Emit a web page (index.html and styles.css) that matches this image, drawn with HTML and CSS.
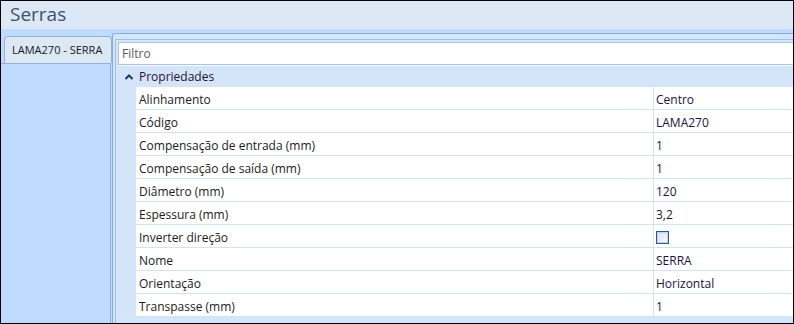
FILE: index.html
```html
<!DOCTYPE html>
<html lang="pt">
<head>
    <meta charset="UTF-8">
    <title>Serras</title>
    <link rel="stylesheet" href="styles.css">
</head>
<body>
    <div class="janela">
        <header class="titulo">Serras</header>
        <div class="area">
            <aside class="lateral">
                <div class="aba">LAMA270 - SERRA</div>
                <div class="painel-lateral"></div>
            </aside>
            <section class="painel">
                <div class="painel-interno">
                    <div class="filtro">Filtro</div>
                    <div class="grade">
                        <div class="categoria">
                            <span class="seta">
                                <svg width="8" height="6" viewBox="0 0 8 6"><path d="M0.5 5 L4 1.5 L7.5 5" fill="none" stroke="#1c3a68" stroke-width="2"/></svg>
                            </span>
                            Propriedades
                        </div>
                        <div class="linha"><div class="nome">Alinhamento</div><div class="valor">Centro</div></div>
                        <div class="linha"><div class="nome">Código</div><div class="valor">LAMA270</div></div>
                        <div class="linha"><div class="nome">Compensação de entrada (mm)</div><div class="valor">1</div></div>
                        <div class="linha"><div class="nome">Compensação de saída (mm)</div><div class="valor">1</div></div>
                        <div class="linha"><div class="nome">Diâmetro (mm)</div><div class="valor">120</div></div>
                        <div class="linha"><div class="nome">Espessura (mm)</div><div class="valor">3,2</div></div>
                        <div class="linha"><div class="nome">Inverter direção</div><div class="valor"><span class="caixa"></span></div></div>
                        <div class="linha"><div class="nome">Nome</div><div class="valor">SERRA</div></div>
                        <div class="linha"><div class="nome">Orientação</div><div class="valor">Horizontal</div></div>
                        <div class="linha"><div class="nome">Transpasse (mm)</div><div class="valor">1</div></div>
                    </div>
                </div>
            </section>
        </div>
    </div>
</body>
</html>
```

FILE: styles.css
```css
body {
    margin: 0;
    font-family: "Open Sans", "Noto Sans", sans-serif;
    font-size: 12px;
    color: #1a1a1a;
    overflow: hidden;
}

.janela {
    width: 794px;
    height: 324px;
    border: 1px solid #000;
    box-sizing: border-box;
    display: flex;
    flex-direction: column;
    overflow: hidden;
    background-color: #bfdbff;
}

.titulo {
    height: 28px;
    line-height: 27px;
    padding-left: 9px;
    font-size: 19px;
    color: #3f5168;
    background-color: #dce8f6;
}

.area {
    flex: 1;
    display: flex;
    background-color: #bfdbff;
}

/* coluna da esquerda com a aba */
.lateral {
    width: 111px;
    display: flex;
    flex-direction: column;
    flex-shrink: 0;
}

.aba {
    position: relative;
    z-index: 1;
    margin: 7px 0 0 3px;
    width: 108px;
    height: 27px;
    line-height: 26px;
    padding-left: 7px;
    box-sizing: border-box;
    background-color: #dde8f5;
    border: 1px solid #8fb2df;
    border-bottom: none;
    border-radius: 4px 4px 0 0;
    font-size: 11px;
    white-space: nowrap;
}

.painel-lateral {
    flex: 1;
    width: 110px;
    border-right: 1px solid #8aafe0;
    box-sizing: border-box;
    border-top: 1px solid #8fb2df;
}

.painel {
    flex: 1;
    margin-top: 4px;
    padding: 5px 0 0 2px;
    background-color: #d6e6fa;
    border-top: 1px solid #86acdd;
    border-left: 1px solid #86acdd;
    border-top-left-radius: 3px;
    display: flex;
}

.painel-interno {
    flex: 1;
    padding: 2px 0 0 2px;
    border-top: 1px solid #9cbfe9;
    border-left: 1px solid #9cbfe9;
    display: flex;
    flex-direction: column;
}

.filtro {
    height: 23px;
    line-height: 21px;
    padding-left: 3px;
    box-sizing: border-box;
    border: 1px solid #a9c3e4;
    border-right: none;
    background-color: #fff;
    color: #5a5a5a;
}

.grade {
    border-top: 1px solid #fff;
}

.categoria {
    height: 21px;
    line-height: 20px;
    padding-top: 1px;
    box-sizing: border-box;
    display: flex;
    align-items: center;
    background-color: #d5e5f9;
    color: #261236;
}

.seta {
    width: 21px;
    display: flex;
    justify-content: center;
}

.linha {
    display: flex;
    height: 23px;
    background-color: #d5e5f9;
}

.nome,
.valor {
    background-color: #fff;
    border-bottom: 1px solid #d3e2f6;
    box-sizing: border-box;
    padding: 3px 0 0 3px;
    line-height: 19px;
    white-space: nowrap;
}

.nome {
    margin-left: 18px;
    width: 518px;
    border-right: 1px solid #d3e2f6;
    color: #1b1b1b;
}

.valor {
    flex: 1;
    padding-left: 2px;
    color: #21123a;
}

.caixa {
    display: block;
    width: 13px;
    height: 13px;
    margin-top: 3px;
    box-sizing: border-box;
    border: 1px solid #24599a;
    background: linear-gradient(135deg, #d9e1ea, #f7f9fb);
    box-shadow: inset 0 0 0 1px #c8d3df;
}
```
